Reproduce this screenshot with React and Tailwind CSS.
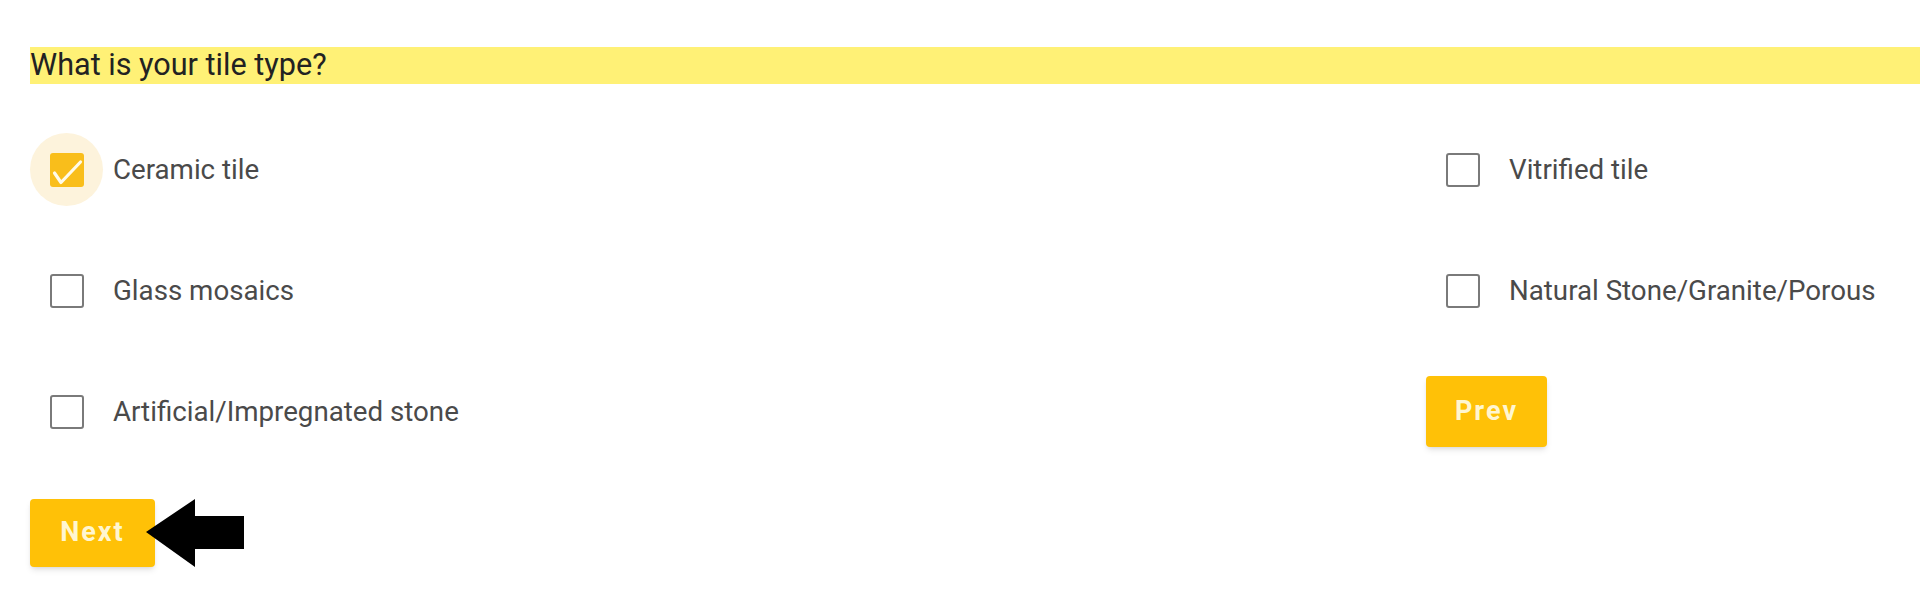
import React, { useState } from 'react';

const options = [
  'Ceramic tile',
  'Vitrified tile',
  'Glass mosaics',
  'Natural Stone/Granite/Porous',
  'Artificial/Impregnated stone',
];

function Option({ label, checked, onToggle }) {
  return (
    <label className="flex items-center cursor-pointer select-none">
      <span
        className={
          'w-[73px] h-[73px] rounded-full flex items-center justify-center ' +
          (checked ? 'bg-[#fdf3dc]' : '')
        }
      >
        {checked ? (
          <span className="w-[34px] h-[34px] rounded-[3px] bg-[#f9be1b]">
            <svg width="34" height="34" viewBox="0 0 34 34" fill="none">
              <path d="M4.5 20l6.5 9.5L30.5 9" stroke="#fffbea" strokeWidth="3.2" strokeLinecap="round" strokeLinejoin="round" />
            </svg>
          </span>
        ) : (
          <span className="w-[34px] h-[34px] rounded-[3px] border-2 border-[#7a7a7a] bg-white" />
        )}
      </span>
      <span className="ml-[10px] text-[27.7px] text-[#4a4a4a]">{label}</span>
      <input type="checkbox" className="hidden" checked={checked} onChange={onToggle} />
    </label>
  );
}

export default function App() {
  const [selected, setSelected] = useState({ 'Ceramic tile': true });

  const toggle = (name) => {
    setSelected(prev => ({ ...prev, [name]: !prev[name] }));
  };

  return (
    <div className="min-h-screen bg-white pl-[30px] pt-[47px] font-['Roboto','Liberation_Sans',sans-serif]">
      {/* Question */}
      <div className="h-[37px] bg-[#fff176] flex items-center text-[30.6px] text-[#222] leading-none">
        What is your tile type?
      </div>

      <div className="grid grid-cols-[1396px_1fr] auto-rows-[121px] items-center mt-[25px]">
        {options.map(name => (
          <Option
            key={name}
            label={name}
            checked={!!selected[name]}
            onToggle={() => toggle(name)}
          />
        ))}

        <div>
          <button className="w-[121px] h-[71px] rounded bg-[#ffc107] text-[#fff6d0] text-[27px] tracking-[2px] font-bold shadow-md">
            Prev
          </button>
        </div>

        <div className="relative">
          <button className="w-[125px] h-[68px] rounded bg-[#ffc107] text-[#fff6d0] text-[27px] tracking-[2px] font-bold shadow-md">
            Next
          </button>
          <svg
            className="absolute left-[116px] top-0"
            width="98"
            height="68"
            viewBox="0 0 98 68"
          >
            <polygon points="0,33 49,0 49,17 98,17 98,50 49,50 49,68" fill="#000" />
          </svg>
        </div>
      </div>
    </div>
  );
}
